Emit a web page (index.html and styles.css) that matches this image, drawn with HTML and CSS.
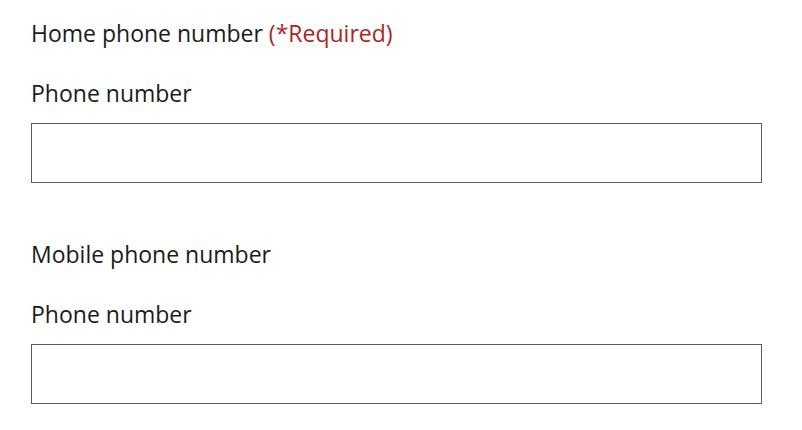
FILE: index.html
```html
<!DOCTYPE html>
<html lang="en">
<head>
<meta charset="UTF-8">
<title>Phone numbers</title>
<link rel="stylesheet" href="styles.css">
</head>
<body>
<form class="phone_form">
  <fieldset class="phone_group">
    <legend class="group_title">Home phone number <span class="required">(*Required)</span></legend>
    <label class="field_label" for="home-phone">Phone number</label>
    <input class="field_input" id="home-phone" type="tel">
  </fieldset>
  <fieldset class="phone_group">
    <legend class="group_title">Mobile phone number</legend>
    <label class="field_label" for="mobile-phone">Phone number</label>
    <input class="field_input" id="mobile-phone" type="tel">
  </fieldset>
</form>
</body>
</html>
```

FILE: styles.css
```css
* {
  margin: 0;
  padding: 0;
  box-sizing: border-box;
}
body {
  background: #fff;
  color: #1b1b1b;
  font-family: "Open Sans", "Noto Sans", sans-serif;
  font-size: 23px;
}
.phone_form {
  padding: 18px 40px 0 31px;
}
.phone_group {
  border: 0;
  display: flex;
  flex-direction: column;
}
.phone_group + .phone_group {
  margin-top: 56px;
}
.group_title {
  float: left; /* legend가 fieldset 흐름 안에 들어오도록 */
  width: 100%;
  line-height: 30px;
  margin-bottom: 30px;
}
.required {
  color: #b21f1f;
}
.field_label {
  display: block;
  line-height: 30px;
  margin-bottom: 15px;
}
.field_input {
  display: block;
  width: 731px;
  height: 60px;
  border: 1px solid #565c65;
  font: inherit;
  padding: 0 8px;
}
```
